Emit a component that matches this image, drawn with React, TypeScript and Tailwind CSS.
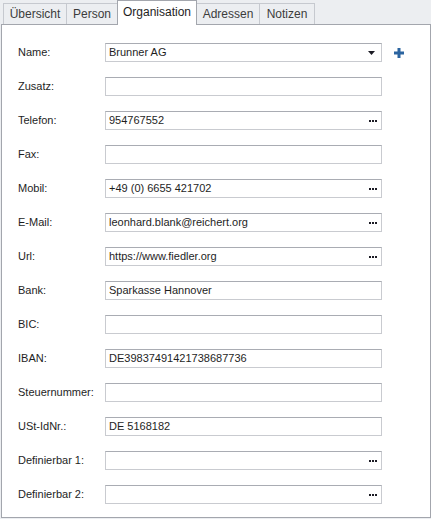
// Kontakt-Dialog — Registerkarte "Organisation"
const tabs = [
  { label: 'Übersicht', w: 'w-[64px]' },
  { label: 'Person', w: 'w-[52px]' },
  { label: 'Organisation', w: 'w-[80px]', active: true },
  { label: 'Adressen', w: 'w-[64px]' },
  { label: 'Notizen', w: 'w-[56px]' },
]

type Row = { label: string; value?: string; kind?: 'combo' | 'dots' }

const rows: Row[] = [
  { label: 'Name:', value: 'Brunner AG', kind: 'combo' },
  { label: 'Zusatz:' },
  { label: 'Telefon:', value: '954767552', kind: 'dots' },
  { label: 'Fax:' },
  { label: 'Mobil:', value: '+49 (0) 6655 421702', kind: 'dots' },
  { label: 'E-Mail:', value: 'leonhard.blank@reichert.org', kind: 'dots' },
  { label: 'Url:', value: 'https://www.fiedler.org', kind: 'dots' },
  { label: 'Bank:', value: 'Sparkasse Hannover' },
  { label: 'BIC:' },
  { label: 'IBAN:', value: 'DE39837491421738687736' },
  { label: 'Steuernummer:' },
  { label: 'USt-IdNr.:', value: 'DE 5168182' },
  { label: 'Definierbar 1:', kind: 'dots' },
  { label: 'Definierbar 2:', kind: 'dots' },
]

function Dots() {
  return (
    <span className="flex gap-[1px]">
      <span className="h-[2px] w-[2px] bg-[#1b1b24]" />
      <span className="h-[2px] w-[2px] bg-[#1b1b24]" />
      <span className="h-[2px] w-[2px] bg-[#1b1b24]" />
    </span>
  )
}

export default function App() {
  return (
    <div
      className="h-[519px] w-[431px] overflow-hidden bg-[#eceef1] text-[11px] leading-none text-[#1e1e1e]"
      style={{ fontFamily: '"Liberation Sans", Arial, sans-serif' }}
    >
      {/* ---- Tab-Leiste ---- */}
      <div className="flex h-[24px] items-end pl-[4px]">
        {tabs.map((t) =>
          t.active ? (
            <div
              key={t.label}
              className={`${t.w} relative z-10 -ml-px -mb-px flex h-[25px] items-center justify-center border border-b-0 border-[#a3a6ad] bg-white pb-[3px] text-[12px] text-[#1e1e1e]`}
            >
              {t.label}
            </div>
          ) : (
            <div
              key={t.label}
              className={`${t.w} -ml-px flex h-[21px] items-center justify-center border border-b-0 border-[#c6c9cf] bg-[#eceef1] text-[12px] text-[#3c3c3c]`}
            >
              {t.label}
            </div>
          ),
        )}
      </div>

      {/* ---- Inhalt ---- */}
      <div className="ml-[1px] flex h-[494px] w-[430px] flex-col gap-[15px] border border-[#a3a6ad] bg-white pt-[18px]">
        {rows.map((r) => (
          <div key={r.label} className="flex h-[19px] items-center">
            <div className="w-[103px] pl-[16px] text-[11px]">{r.label}</div>
            <div className="flex h-[19px] w-[277px] items-center border border-[#c9cbd0] border-t-[#a9acb3] bg-white pl-[3px] pr-[4px]">
              <span className="flex-1 text-[11px]">{r.value}</span>
              {r.kind === 'dots' && <Dots />}
              {r.kind === 'combo' && (
                <svg width="7" height="4" viewBox="0 0 7 4" className="mr-[2px]">
                  <path d="M0 0h7L3.5 4z" fill="#1b1b24" />
                </svg>
              )}
            </div>
            {r.kind === 'combo' && (
              <svg width="10" height="10" viewBox="0 0 10 10" className="ml-[12px]">
                <path d="M3.5 0h3v3.5H10v3H6.5V10h-3V6.5H0v-3h3.5z" fill="#2b64a0" />
              </svg>
            )}
          </div>
        ))}
      </div>
    </div>
  )
}
